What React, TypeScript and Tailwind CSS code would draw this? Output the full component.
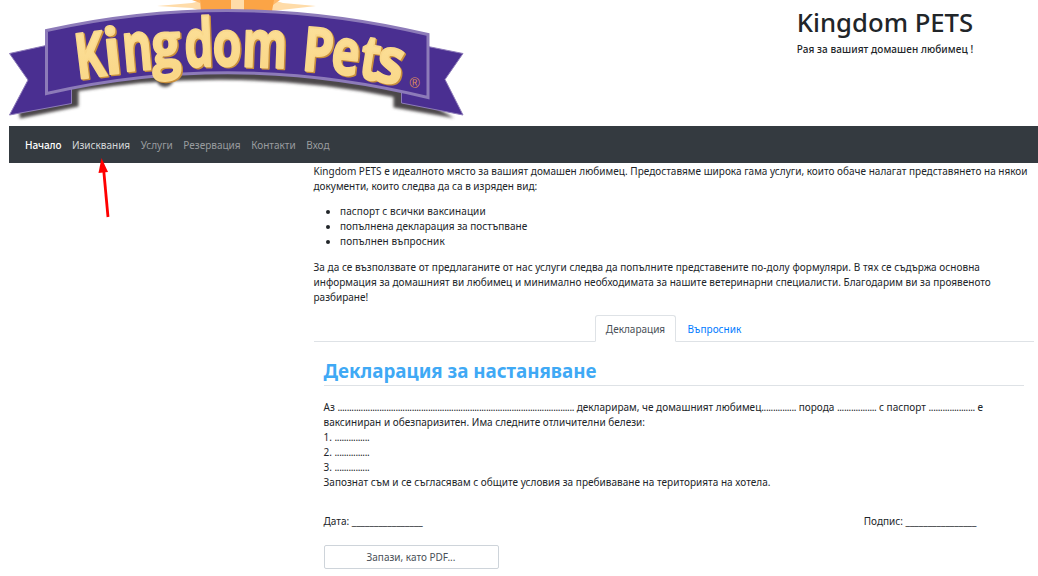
type Glyph = { ch: string; x: number; y: number; w: number; size: number; rot: number };

const letters: Glyph[] = [
  { ch: "K", x: 77.5, y: 79, w: 30, size: 63, rot: -7 },
  { ch: "i", x: 106, y: 74.5, w: 17, size: 63, rot: -6 },
  { ch: "n", x: 124, y: 71.5, w: 30, size: 68, rot: -5 },
  { ch: "g", x: 152.5, y: 67, w: 29, size: 61, rot: -3 },
  { ch: "d", x: 185, y: 67, w: 29, size: 67, rot: -2 },
  { ch: "o", x: 212.5, y: 65.5, w: 29, size: 65, rot: 0 },
  { ch: "m", x: 241.5, y: 66.5, w: 45, size: 66, rot: 2 },
  { ch: "P", x: 301, y: 70, w: 31, size: 61, rot: 5 },
  { ch: "e", x: 329.5, y: 72.5, w: 28, size: 64, rot: 7 },
  { ch: "t", x: 357.5, y: 77.5, w: 20, size: 62, rot: 9 },
  { ch: "s", x: 373.5, y: 80, w: 27, size: 63, rot: 11 },
];

function Lettering({ fill, stroke }: { fill: string; stroke: string }) {
  return (
    <>
      {letters.map((l) => (
        <text
          key={l.ch}
          transform={`translate(${l.x} ${l.y}) rotate(${l.rot})`}
          fontSize={l.size}
          textLength={l.w}
          lengthAdjust="spacingAndGlyphs"
          fill={fill}
          stroke={stroke}
          strokeWidth="2"
          strokeLinejoin="round"
          className="font-['Open_Sans',sans-serif] font-bold"
        >
          {l.ch}
        </text>
      ))}
    </>
  );
}

const band = "M46.5 30.5Q235 -11.5 428 34.5V97.5Q235 50 46.5 93.5Z";
const leftTail = "M46 45.5L9.5 53.5L28 80L9.5 115L71.5 103.5V86H46Z";
const rightTail = "M428 46.5L463 53.5L445 79.5L463 115L401.5 103V86H428Z";

function Logo() {
  return (
    <svg width="465" height="126" viewBox="0 0 465 126" className="block shrink-0 overflow-visible">
      <defs>
        <filter id="soft" x="-10%" y="-20%" width="120%" height="140%">
          <feGaussianBlur stdDeviation="1.4" />
        </filter>
        <linearGradient id="gold" gradientUnits="objectBoundingBox" x1="0" y1="0" x2="0" y2="1">
          <stop offset="0" stopColor="#fde3a0" />
          <stop offset="1" stopColor="#f9d583" />
        </linearGradient>
      </defs>
      <path d="M157 6L192 3L200 1V0H273L283 3L316 6L272 11H201L192 8Z" fill="#ffdca9" />
      <path d="M192 0H200V3ZM273 0H280L273 5Z" fill="#ffb869" />
      <path d="M200 0H231V11H201ZM244 0H274L272 11H244Z" fill="#fba446" />
      <g fill="#4b4648" filter="url(#soft)">
        <path d="M60 60H410V92L430 104L454 118L393.5 107.5V97Q235 66 78.5 91V106.5L20 118.5L19 112L60 100Z" />
        <circle cx="165" cy="78" r="9" />
      </g>
      <path d={leftTail} fill="#4a2f91" stroke="#8d7bb9" strokeWidth="1" />
      <path d={rightTail} fill="#4a2f91" stroke="#8d7bb9" strokeWidth="1" />
      <path d={band} fill="#4a2f91" stroke="#8d7bb9" strokeWidth="3" />
      <g transform="translate(1.4 1.2)">
        <Lettering fill="#c98f3c" stroke="#c98f3c" />
      </g>
      <Lettering fill="url(#gold)" stroke="#f9d88c" />
      <text x="409.5" y="88" fontSize="14" fill="#dd8a5c" className="font-['Liberation_Sans',sans-serif]">
        ®
      </text>
    </svg>
  );
}

function Nav() {
  return (
    <nav className="ml-[9px] flex h-[37px] items-center gap-[10.6px] bg-[#343a40] px-4 pt-[2px] text-[#999c9f]">
      <a className="font-medium text-white tracking-[-0.1px]">Начало</a>
      <a className="text-[#d5d8da]">Изисквания</a>
      <a>Услуги</a>
      <a>Резервация</a>
      <a>Контакти</a>
      <a>Вход</a>
    </nav>
  );
}

function Dots({ count }: { count: number }) {
  return <span className="tracking-[-0.36px]">{".".repeat(count)}</span>;
}

function Intro() {
  return (
    <section className="whitespace-nowrap">
      <p>
        <span className="block tracking-[0.013px]">
          Kingdom PETS е идеалното място за вашият домашен любимец. Предоставяме широка гама услуги, които обаче налагат представянето на някои
        </span>
        документи, които следва да са в изряден вид:
      </p>
      <ul className="mt-2.5 list-disc pl-[26.5px]">
        <li className="tracking-[0.07px]">паспорт с всички ваксинации</li>
        <li className="tracking-[0.02px]">попълнена декларация за постъпване</li>
        <li className="tracking-[0.1px]">попълнен въпросник</li>
      </ul>
      <p className="mt-[11px]">
        <span className="block tracking-[0.042px]">
          За да се възползвате от предлаганите от нас услуги следва да попълните представените по-долу формуляри. В тях се съдържа основна
        </span>
        <span className="block tracking-[0.02px]">
          информация за домашният ви любимец и минимално необходимата за нашите ветеринарни специалисти. Благодарим ви за проявеното
        </span>
        разбиране!
      </p>
    </section>
  );
}

function Tabs() {
  return (
    <div className="mt-2.5 flex h-[27px] justify-center border-b border-[#dee2e6]">
      <button className="mb-[-1px] w-[81px] rounded-t-[3px] border border-b-white border-[#dee2e6] bg-white pt-[2px] pl-px text-[#495057]">
        Декларация
      </button>
      <button className="w-[77px] pt-[2px] pl-px text-[#007bff] tracking-[0.05px]">Въпросник</button>
    </div>
  );
}

function Declaration() {
  return (
    <section className="px-2.5 whitespace-nowrap">
      <h2 className="mt-4 h-[28px] border-b border-[#dee2e6] text-[18.75px] leading-[26px] font-bold text-[#3fa9f5]">
        Декларация за настаняване
      </h2>
      <div className="mt-3.5">
        <p className="tracking-[0.015px]">
          Аз <Dots count={102} /> декларирам, че домашният любимец
          <Dots count={15} /> порода <Dots count={17} /> с паспорт <Dots count={20} /> е
        </p>
        <p className="tracking-[0.02px]">ваксиниран и обезпаризитен. Има следните отличителни белези:</p>
        <p>1. <Dots count={15} /></p>
        <p>2. <Dots count={15} /></p>
        <p>3. <Dots count={15} /></p>
        <p className="tracking-[0.025px]">Запознат съм и се съгласявам с общите условия за пребиваване на територията на хотела.</p>
      </div>
      <div className="mt-6 flex justify-between pr-[47px]">
        <span>Дата: ________________</span>
        <span>Подпис: ________________</span>
      </div>
      <button className="mt-4 block h-6 w-[175px] rounded-[2px] border border-[#ced4da] bg-white text-[#495057]">
        Запази, като PDF...
      </button>
    </section>
  );
}

export default function App() {
  return (
    <div className="relative h-[576px] w-[1038px] overflow-hidden bg-white font-['Noto_Sans','Open_Sans',sans-serif] text-[10px] leading-[15px] text-[#212529]">
      <header className="flex h-[126px] justify-between">
        <Logo />
        <div className="mr-[3px] w-[300px] text-center font-medium">
          <h1 className="mt-[8px] text-[25.7px] leading-[30px]">Kingdom PETS</h1>
          <p className="mt-[4px] tracking-[0.07px]">Рая за вашият домашен любимец !</p>
        </div>
      </header>
      <Nav />
      <main className="ml-[313.5px] w-[720px] pt-px">
        <Intro />
        <Tabs />
        <Declaration />
      </main>
      <svg width="16" height="60" viewBox="0 0 16 60" className="absolute top-[158px] left-[97px]">
        <path d="M6.5 10L11 59" stroke="#ff0000" strokeWidth="2.8" />
        <path d="M4.5 0L11 14L1.5 15Z" fill="#ff0000" />
      </svg>
    </div>
  );
}
